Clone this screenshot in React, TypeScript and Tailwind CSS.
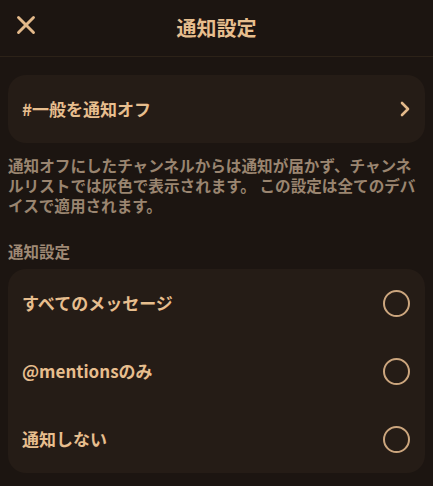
import { X, ChevronRight } from "lucide-react";

const options = ["すべてのメッセージ", "@mentionsのみ", "通知しない"];

const App = () => {
  return (
    <main
      className="w-[433px] h-[486px] overflow-hidden bg-[#1c1511] text-[#e7be8e]"
      style={{ fontFamily: '"Noto Sans CJK JP", "Noto Sans", sans-serif' }}
    >
      <header className="relative h-[57px] flex items-center justify-center border-b border-[#2c2218]">
        <button className="absolute left-[11px] top-[10px] text-[#e3b98a]">
          <X size={30} strokeWidth={2.3} />
        </button>
        <h1 className="text-[20px] font-bold leading-none">通知設定</h1>
      </header>

      <div className="px-2 pt-[18px]">
        <div className="h-[68px] rounded-[18px] bg-[#251c16] flex items-center justify-between pl-[14px] pr-[8px]">
          <span className="text-[17px] font-bold">#一般を通知オフ</span>
          <ChevronRight size={24} strokeWidth={2.6} className="text-[#e3b98a]" />
        </div>

        <p className="mt-3 text-[15.6px] leading-[20px] font-semibold text-[#9a8570]">
          通知オフにしたチャンネルからは通知が届かず、チャンネルリストでは灰色で表示されます。 この設定は全てのデバイスで適用されます。
        </p>

        <h2 className="mt-[26px] text-[15.5px] leading-[20px] font-bold text-[#9f8975]">通知設定</h2>

        <div className="mt-2 rounded-[18px] bg-[#251c16]">
          {options.map((label) => (
            <div key={label} className="h-[68px] flex items-center justify-between pl-[14px] pr-[15px]">
              <span className="text-[17px] font-bold">{label}</span>
              <span className="w-[27px] h-[27px] rounded-full border-[2.5px] border-[#cca67e]" />
            </div>
          ))}
        </div>
      </div>
    </main>
  );
};

export default App;
